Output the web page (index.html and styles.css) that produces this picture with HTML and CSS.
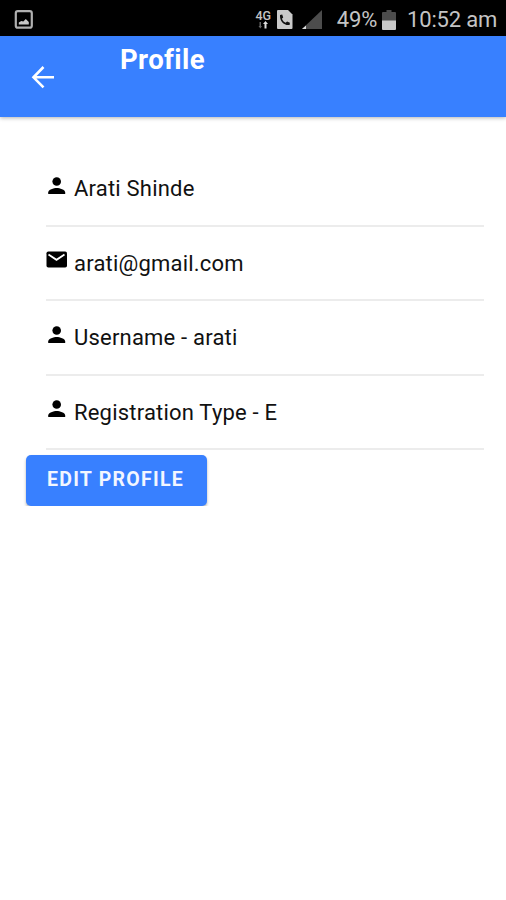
FILE: index.html
```html
<!DOCTYPE html>
<html lang="en">
  <head>
    <meta charset="UTF-8" />
    <meta name="viewport" content="width=device-width, initial-scale=1.0" />
    <title>Profile</title>
    <link rel="stylesheet" href="styles.css">
  </head>
  <body>
    <svg class="defs" width="0" height="0">
      <symbol id="person" viewBox="0 0 21 21">
        <circle cx="10.700" cy="6.500" r="4.300"/>
        <path d="M2.200 19v-1.500c0-3 5.500-4.500 8.500-4.500s8.500 1.500 8.500 4.500V19z"/>
      </symbol>
      <symbol id="mail" viewBox="0 0 21 21">
        <rect x="0.500" y="2.500" width="20.500" height="16" rx="1.800"/>
        <path d="M2.500 5.500l8 5.300 8-5.300" fill="none" stroke="#fff" stroke-width="1.800"/>
      </symbol>
    </svg>

    <div class="status-bar">
      <svg class="picture-icon" width="20" height="20" viewBox="0 0 20 20">
        <rect x="1.800" y="1.200" width="16" height="16.500" rx="2" fill="none" stroke="#b0b0b0" stroke-width="2.200"/>
        <path d="M4.800 14.500v-2l2.500-1.500 2 .5 2.500-2.500 3 3v2.500z" fill="#c8c8c8"/>
      </svg>
      <div class="network">
        <span>4G</span>
        <svg width="12" height="8" viewBox="0 0 12 8">
          <path d="M2.500 1h1.500v4h1L3.300 7.500 1.500 5h1z" fill="#666"/>
          <path d="M7.500 7.500V3H6l2.500-3L11 3H9.500v4.500z" fill="#ddd"/>
        </svg>
      </div>
      <svg class="sim-icon" width="16" height="19" viewBox="0 0 16 19">
        <path d="M1 0h10l4.500 4.500V18a1 1 0 0 1-1 1H1a1 1 0 0 1-1-1V1a1 1 0 0 1 1-1z" fill="#c9c9c9"/>
        <path d="M3 5l2.200-.5 1 3-1.300 1.300c.8 1.900 1.900 3.100 3.700 4l1.500-1.300 2.800 1.200-.3 2.300C7.100 15.700 2.500 11.300 3 5z" fill="#111"/>
      </svg>
      <svg class="signal-icon" width="20" height="19" viewBox="0 0 20 19">
        <path d="M0 19L20 0v19z" fill="#4c4c4c"/>
        <path d="M0 19l4-3.500V19z" fill="#ddd"/>
      </svg>
      <span class="battery-text">49%</span>
      <svg class="battery-icon" width="14" height="20" viewBox="0 0 14 20">
        <path d="M4.500 0h5v2H13a1 1 0 0 1 1 1v8H0V3a1 1 0 0 1 1-1h3.500z" fill="#4c4c4c"/>
        <path d="M0 10.500h14V19a1 1 0 0 1-1 1H1a1 1 0 0 1-1-1z" fill="#c9c9c9"/>
      </svg>
      <span class="time">10:52 am</span>
    </div>

    <header class="toolbar">
      <svg class="back" width="24" height="24" viewBox="0 0 24 24">
        <path d="M23 12.300H3M12.500 2L2.500 12.300l10 10" fill="none" stroke="#fff" stroke-width="2.600"/>
      </svg>
      <h1>Profile</h1>
    </header>

    <main>
      <ul class="profile-list">
        <li><svg class="icon"><use href="#person"/></svg><span class="name">Arati Shinde</span></li>
        <li><svg class="icon"><use href="#mail"/></svg><span class="email">arati@gmail.com</span></li>
        <li><svg class="icon"><use href="#person"/></svg><span class="username">Username - arati</span></li>
        <li><svg class="icon"><use href="#person"/></svg><span class="type">Registration Type - E</span></li>
      </ul>
      <button type="button" class="edit-btn">EDIT PROFILE</button>
    </main>
  </body>
</html>
```
FILE: styles.css
```css
body {
  margin: 0;
  background: #fff;
  color: #111;
  font-family: Roboto, "Liberation Sans", sans-serif;
}
.defs {
  display: block;
}
.status-bar {
  display: flex;
  align-items: center;
  height: 36px;
  box-sizing: border-box;
  padding: 3px 9px 0 14px;
  background: #000;
  color: #c4c4c4;
  font-size: 22px;
  letter-spacing: -0.2px;
  line-height: 26px;
  white-space: nowrap;
}
.status-bar span {
  padding-top: 1px;
}
.network {
  display: flex;
  flex-direction: column;
  align-items: center;
  margin-left: auto;
  font-size: 12.5px;
  font-weight: 500;
  line-height: 10px;
}
.sim-icon {
  margin-left: 6px;
}
.signal-icon {
  margin-left: 9px;
}
.battery-text {
  margin-left: 15px;
}
.battery-icon {
  margin-left: 5px;
}
.time {
  margin-left: 11px;
}
.toolbar {
  display: flex;
  align-items: flex-start;
  height: 81px;
  box-sizing: border-box;
  padding-left: 31px;
  background: #3880ff;
  color: #fff;
  box-shadow: 0 1px 4px rgba(0, 0, 0, 0.3);
}
.back {
  margin-top: 29px;
}
h1 {
  margin: 8px 0 0 65px;
  font-size: 27.5px;
  font-weight: 700;
  letter-spacing: 0.4px;
  line-height: 32px;
}
main {
  padding: 35px 22px 0 26px;
}
.profile-list {
  margin: 0 0 5px 20px;
  padding: 0;
  list-style: none;
}
.profile-list li {
  display: flex;
  height: 74.5px;
  box-sizing: border-box;
  padding-top: 22px;
  border-bottom: 2px solid #ececec;
  font-size: 22px;
  letter-spacing: 0.2px;
  line-height: 30px;
}
.icon {
  width: 21px;
  height: 21px;
  margin: 0.7px 7px 0 0;
  fill: #000;
}
.edit-btn {
  display: block;
  width: 181px;
  height: 51px;
  padding: 0 2px 2px 0;
  border: none;
  border-radius: 5px;
  background: #3880ff;
  color: #f2f6ff;
  font-family: inherit;
  font-size: 19.5px;
  font-weight: 700;
  letter-spacing: 1.25px;
  box-shadow: 0 2px 3px rgba(0, 0, 0, 0.3);
}
```
